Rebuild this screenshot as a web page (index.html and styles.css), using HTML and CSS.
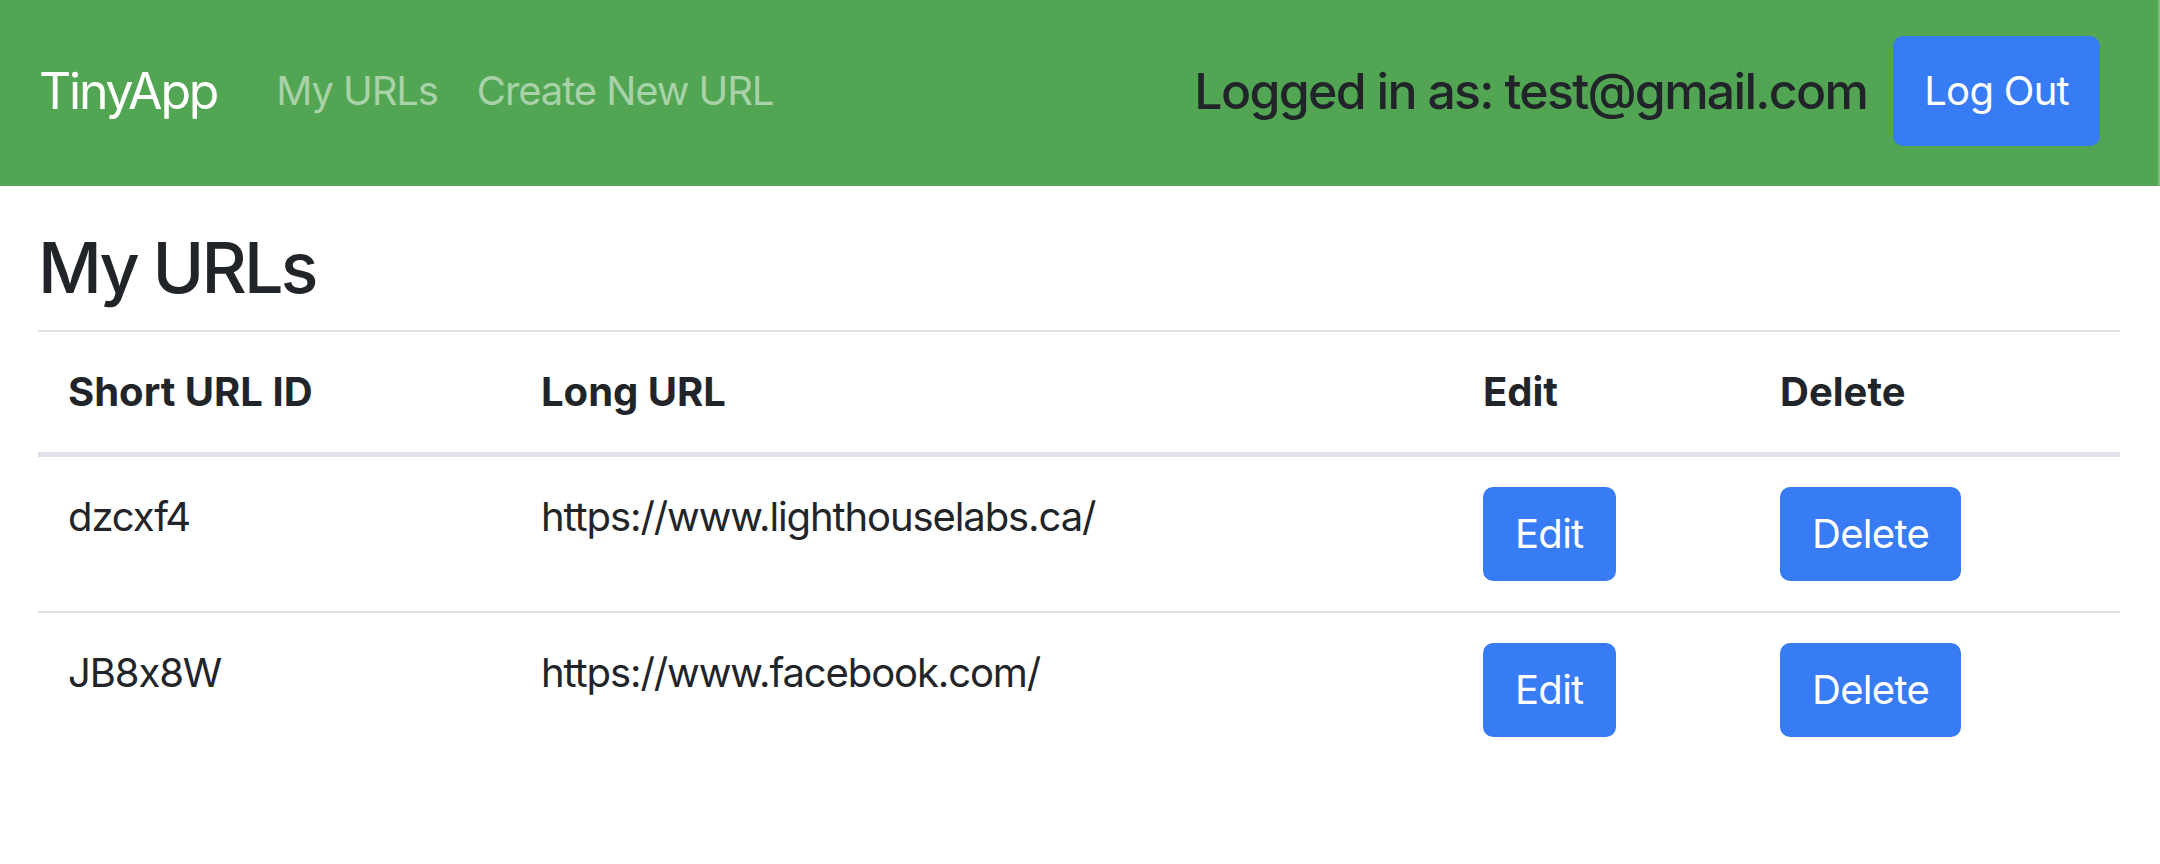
FILE: index.html
```html
<!DOCTYPE html>
<html lang="en">
<head>
<meta charset="utf-8">
<title>TinyApp</title>
<link rel="stylesheet" href="styles.css">
</head>
<body>
<nav class="navbar">
  <a class="brand" href="#">TinyApp</a>
  <div class="nav-links">
    <a class="nav-link" href="#">My URLs</a>
    <a class="nav-link" href="#">Create New URL</a>
  </div>
  <div class="nav-right">
    <span class="user">Logged in as: test@gmail.com</span>
    <button class="btn btn-nav" type="button">Log Out</button>
  </div>
</nav>
<main class="container">
  <h3 class="title">My URLs</h3>
  <table class="table">
    <colgroup>
      <col class="c-short">
      <col class="c-long">
      <col class="c-edit">
      <col class="c-del">
    </colgroup>
    <thead>
      <tr>
        <th>Short URL ID</th>
        <th>Long URL</th>
        <th>Edit</th>
        <th>Delete</th>
      </tr>
    </thead>
    <tbody>
      <tr>
        <td>dzcxf4</td>
        <td>https://www.lighthouselabs.ca/</td>
        <td><button class="btn" type="button">Edit</button></td>
        <td><button class="btn" type="button">Delete</button></td>
      </tr>
      <tr>
        <td>JB8x8W</td>
        <td>https://www.facebook.com/</td>
        <td><button class="btn" type="button">Edit</button></td>
        <td><button class="btn" type="button">Delete</button></td>
      </tr>
    </tbody>
  </table>
</main>
</body>
</html>
```

FILE: styles.css
```css
* { box-sizing: border-box; }

html, body {
  margin: 0;
  padding: 0;
  background: #ffffff;
}

body {
  font-family: Inter, "Noto Sans", "Liberation Sans", sans-serif;
  font-feature-settings: "calt" 0;
  font-size: 40px;
  line-height: 1.5;
  color: #212529;
  letter-spacing: -1px;
}

.navbar {
  display: flex;
  align-items: center;
  height: 186px;
  background: #52a552;
  padding: 0 58px 4px 39px;
  border-right: 2px solid #7ebb7e;
}

.brand {
  font-size: 50px;
  line-height: 75px;
  color: #ffffff;
  text-decoration: none;
  margin-right: 39px;
  letter-spacing: -2.2px;
}

.nav-links {
  display: flex;
}

.nav-link {
  padding: 0 19px 0 20px;
  color: rgba(255, 255, 255, 0.5);
  text-decoration: none;
  font-size: 40px;
  letter-spacing: -1.1px;
}

.nav-right {
  margin-left: auto;
  display: flex;
  align-items: center;
  gap: 26px;
}

.user {
  font-size: 50px;
  font-weight: 500;
  line-height: 1.2;
  color: #212529;
  letter-spacing: -1.7px;
}

.btn {
  font-family: inherit;
  font-feature-settings: "calt" 0;
  font-size: 40px;
  line-height: 60px;
  color: #ffffff;
  background: #377bf5;
  border: 2px solid #377bf5;
  border-radius: 10px;
  padding: 15px 30px;
  cursor: pointer;
  letter-spacing: -0.7px;
}

.btn-nav {
  height: 110px;
  padding: 0 29px;
}

.container {
  padding: 40px 40px 0 38px;
}

.title {
  margin: 0 0 20px 0;
  font-size: 70px;
  font-weight: 500;
  line-height: 84px;
  letter-spacing: -2.9px;
}

.table {
  width: 100%;
  border-collapse: collapse;
  table-layout: fixed;
}

.c-short { width: 473px; }
.c-long { width: 942px; }
.c-edit { width: 297px; }
.c-del { width: auto; }

.table th,
.table td {
  padding: 30px;
  text-align: left;
  vertical-align: top;
  border-top: 2px solid #dee2e6;
}

.table td {
  letter-spacing: -1.1px;
}

.table th {
  font-weight: 700;
  letter-spacing: 0;
  vertical-align: bottom;
  border-bottom: 5px solid #dee2e6;
}
```
